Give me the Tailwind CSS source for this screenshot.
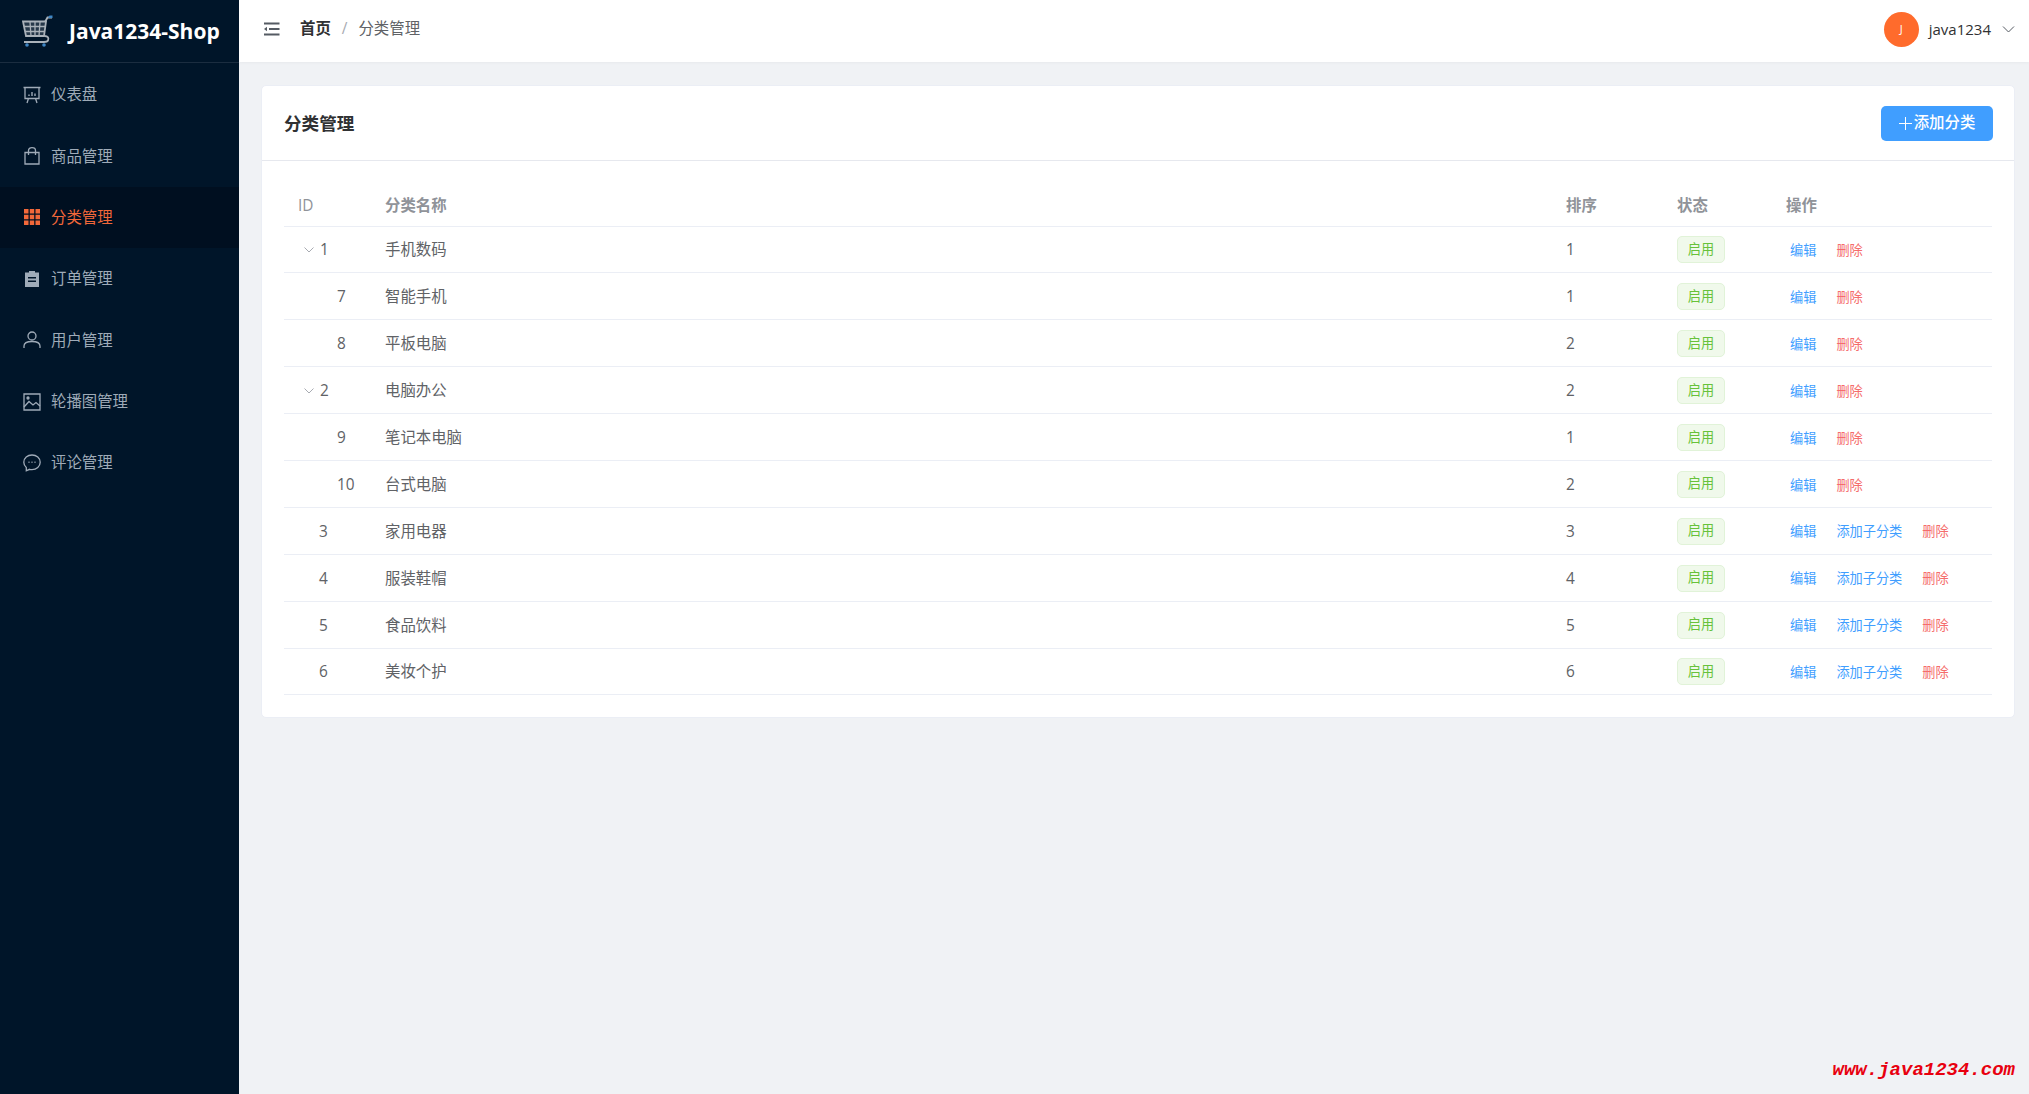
<!DOCTYPE html>
<html lang="zh-CN">
<head>
  <meta charset="UTF-8">
  <title>分类管理</title>
  <script src="https://cdn.jsdelivr.net/npm/@tailwindcss/browser@4"></script>
</head>
<body class="bg-[#f0f2f5] font-['Open_Sans','Noto_Sans_CJK_SC',sans-serif] text-[15.4px] text-[#606266]">
  <div class="relative flex h-screen overflow-hidden">

    <!-- sidebar -->
    <aside class="w-[239px] shrink-0 bg-[#001529] text-[#9fabb8]">
      <div class="flex h-[63px] items-center gap-[15px] border-b border-[#1b2d40] pl-[22px]">
        <svg class="h-[32px] w-[32px] shrink-0" viewBox="0 0 32 32" fill="none">
          <path d="M1 6.5H24L22 21H4Z" fill="#26384a" stroke="#aab2ba" stroke-width="1.8"/>
          <path d="M8 7L9 21M13 7V21M18 7L17 21M2 11.5H23.5M3 16.5H22.5" stroke="#aab2ba" stroke-width="1.3"/>
          <path d="M23 7L25.5 2.5H30M22.5 21C26 21 27 23 26 25.5C25.5 26.5 24 27 22 27H2" stroke="#aab2ba" stroke-width="1.8"/>
          <path d="M26 2.5L27.5 0.5H30.5V3H27Z" fill="#3f86c4"/>
          <circle cx="5" cy="30" r="1.8" fill="#3f86c4"/>
          <circle cx="22" cy="30" r="1.8" fill="#3f86c4"/>
        </svg>
        <span class="text-[21px] leading-none font-bold text-white">Java1234-Shop</span>
      </div>
      <nav class="pt-px">
        <a class="flex h-[61.4px] items-center gap-[10px] pl-[23px]">
          <svg class="h-[18px] w-[18px] shrink-0" viewBox="0 0 18 18" fill="none" stroke="currentColor" stroke-width="1.3"><path d="M0.5 1.5H17.5M2 1.5V12.5H16V1.5M5.5 12.5L4 17M12.5 12.5L14 17"/><path d="M6 10V8.5M9 10V6M12 10V7.5" stroke-width="1.4"/></svg>
          <span>仪表盘</span>
        </a>
        <a class="flex h-[61.4px] items-center gap-[10px] pl-[23px]">
          <svg class="h-[18px] w-[18px] shrink-0" viewBox="0 0 18 18" fill="none" stroke="currentColor" stroke-width="1.3"><path d="M2 5.5H16V17H2Z"/><path d="M5.5 8V3.5C5.5 1.5 7 0.7 9 0.7S12.5 1.5 12.5 3.5V8"/></svg>
          <span>商品管理</span>
        </a>
        <a class="flex h-[61.4px] items-center gap-[10px] bg-[#000f20] pl-[23px] text-[#f2683a]">
          <svg class="h-[18px] w-[18px] shrink-0" viewBox="0 0 18 18" fill="currentColor"><path d="M1 1H5.5V5.5H1ZM6.8 1H11.2V5.5H6.8ZM12.5 1H17V5.5H12.5ZM1 6.8H5.5V11.2H1ZM6.8 6.8H11.2V11.2H6.8ZM12.5 6.8H17V11.2H12.5ZM1 12.5H5.5V17H1ZM6.8 12.5H11.2V17H6.8ZM12.5 12.5H17V17H12.5Z"/></svg>
          <span>分类管理</span>
        </a>
        <a class="flex h-[61.4px] items-center gap-[10px] pl-[23px]">
          <svg class="h-[18px] w-[18px] shrink-0" viewBox="0 0 18 18"><path fill="currentColor" fill-rule="evenodd" d="M2 2.5H6V1H12V2.5H16V17H2ZM5 7V8.4H13V7ZM5 10.5V11.9H13V10.5Z"/></svg>
          <span>订单管理</span>
        </a>
        <a class="flex h-[61.4px] items-center gap-[10px] pl-[23px]">
          <svg class="h-[18px] w-[18px] shrink-0" viewBox="0 0 18 18" fill="none" stroke="currentColor" stroke-width="1.3"><circle cx="9" cy="5" r="4"/><path d="M1 17V15C1 12 4 10.5 9 10.5S17 12 17 15V17"/></svg>
          <span>用户管理</span>
        </a>
        <a class="flex h-[61.4px] items-center gap-[10px] pl-[23px]">
          <svg class="h-[18px] w-[18px] shrink-0" viewBox="0 0 18 18" fill="none" stroke="currentColor" stroke-width="1.3"><path d="M1 1H17V17H1Z"/><path d="M1 14L6 8.5L10 12L13 9.5L17 13"/><circle cx="5" cy="5" r="1" fill="currentColor"/></svg>
          <span>轮播图管理</span>
        </a>
        <a class="flex h-[61.4px] items-center gap-[10px] pl-[23px]">
          <svg class="h-[18px] w-[18px] shrink-0" viewBox="0 0 18 18" fill="none" stroke="currentColor" stroke-width="1.3"><path d="M9 1C4.5 1 0.8 4 0.8 8.3C0.8 10.5 1.8 12.3 3.3 13.6V16.8L6.5 15.3C7.3 15.5 8.1 15.6 9 15.6C13.5 15.6 17.2 12.5 17.2 8.3S13.5 1 9 1Z"/><path d="M5.5 8.3H6.5M8.5 8.3H9.5M11.5 8.3H12.5" stroke-width="1.5"/></svg>
          <span>评论管理</span>
        </a>
      </nav>
    </aside>

    <div class="flex min-w-0 flex-1 flex-col">
      <!-- top bar -->
      <header class="flex h-[62px] shrink-0 items-center bg-white pr-[14px] pb-[4px] pl-[24px] shadow-[0_1px_3px_rgba(0,0,0,0.04)]">
        <svg class="h-[14px] w-[17px] shrink-0" viewBox="0 0 17 14" fill="none" stroke="#555b63" stroke-width="2"><path d="M1 1.5H16.5M6 7H16.5M1 12.5H16.5"/><path d="M4 4.8L1 7L4 9.2Z" fill="#555b63" stroke="none"/></svg>
        <div class="ml-[20px] flex items-center text-[15.4px]">
          <span class="font-bold text-[#303133]">首页</span>
          <span class="mx-[11px] text-[#a8abb2]">/</span>
          <span>分类管理</span>
        </div>
        <div class="ml-auto flex items-center">
          <div class="flex h-[35px] w-[35px] items-center justify-center rounded-full bg-[#ff6b2c] text-[11px] text-white">J</div>
          <span class="ml-[10px] text-[15px] text-[#303133]">java1234</span>
          <svg class="ml-[11px] h-[7px] w-[13px]" viewBox="0 0 12 7" fill="none" stroke="#555b63" stroke-width="1"><path d="M0.5 0.5L6 6L11.5 0.5"/></svg>
        </div>
      </header>

      <main class="flex-1 pt-[23px] pr-[14px] pl-[22px]">
        <section class="rounded-[5px] border border-[#ebeef5] bg-white">
          <div class="flex h-[75px] items-center justify-between border-b border-[#e6e8ee] pr-[21px] pl-[22px]">
            <h2 class="text-[17.6px] font-bold text-[#303133]">分类管理</h2>
            <button class="flex h-[35px] w-[112px] items-center justify-center rounded-[5px] bg-[#409eff] text-[15.4px] font-medium text-white">
              <svg class="mr-[2px] h-[13px] w-[13px]" viewBox="0 0 13 13" fill="none" stroke="white" stroke-width="1"><path d="M6.5 0V13M0 6.5H13"/></svg>
              添加分类
            </button>
          </div>
          <div class="px-[22px] pt-[21px] pb-[22px]">
            <table class="w-full table-fixed border-collapse text-left">
              <colgroup>
                <col class="w-[89px]"><col class="w-[1192px]"><col class="w-[112px]"><col class="w-[109px]"><col>
              </colgroup>
              <thead>
                <tr class="h-[44px] border-b border-[#ebeef5] text-[#909399]">
                  <th class="pt-[3px] pl-[14px] font-medium">ID</th>
                  <th class="pt-[3px] pl-[12px] font-semibold">分类名称</th>
                  <th class="pt-[3px] pl-[1px] font-semibold">排序</th>
                  <th class="pt-[3px] font-semibold">状态</th>
                  <th class="pt-[3px] font-semibold">操作</th>
                </tr>
              </thead>
              <tbody>
                <tr class="h-[46.9px] border-b border-[#ebeef5]">
                  <td class="pt-px pl-[20px]"><span class="flex items-center"><svg class="mr-[6px] h-[6px] w-[10px]" viewBox="0 0 10 6" fill="none" stroke="#a8abb2"><path d="M0.5 0.5L5 5L9.5 0.5"/></svg>1</span></td>
                  <td class="pt-px pl-[12px]">手机数码</td><td class="pt-px pl-[1px]">1</td>
                  <td class="pt-px"><span class="inline-flex h-[27px] w-[48px] items-center justify-center rounded-[5px] border border-[#e1f3d8] bg-[#f0f9eb] text-[13.2px] text-[#67c23a]">启用</span></td>
                  <td class="pt-[3px] pl-[4px] text-[13.2px]"><span class="flex gap-[20px]"><a class="text-[#409eff]">编辑</a><a class="text-[#f56c6c]">删除</a></span></td>
                </tr>
                <tr class="h-[46.9px] border-b border-[#ebeef5]">
                  <td class="pt-px pl-[53px]">7</td>
                  <td class="pt-px pl-[12px]">智能手机</td><td class="pt-px pl-[1px]">1</td>
                  <td class="pt-px"><span class="inline-flex h-[27px] w-[48px] items-center justify-center rounded-[5px] border border-[#e1f3d8] bg-[#f0f9eb] text-[13.2px] text-[#67c23a]">启用</span></td>
                  <td class="pt-[3px] pl-[4px] text-[13.2px]"><span class="flex gap-[20px]"><a class="text-[#409eff]">编辑</a><a class="text-[#f56c6c]">删除</a></span></td>
                </tr>
                <tr class="h-[46.9px] border-b border-[#ebeef5]">
                  <td class="pt-px pl-[53px]">8</td>
                  <td class="pt-px pl-[12px]">平板电脑</td><td class="pt-px pl-[1px]">2</td>
                  <td class="pt-px"><span class="inline-flex h-[27px] w-[48px] items-center justify-center rounded-[5px] border border-[#e1f3d8] bg-[#f0f9eb] text-[13.2px] text-[#67c23a]">启用</span></td>
                  <td class="pt-[3px] pl-[4px] text-[13.2px]"><span class="flex gap-[20px]"><a class="text-[#409eff]">编辑</a><a class="text-[#f56c6c]">删除</a></span></td>
                </tr>
                <tr class="h-[46.9px] border-b border-[#ebeef5]">
                  <td class="pt-px pl-[20px]"><span class="flex items-center"><svg class="mr-[6px] h-[6px] w-[10px]" viewBox="0 0 10 6" fill="none" stroke="#a8abb2"><path d="M0.5 0.5L5 5L9.5 0.5"/></svg>2</span></td>
                  <td class="pt-px pl-[12px]">电脑办公</td><td class="pt-px pl-[1px]">2</td>
                  <td class="pt-px"><span class="inline-flex h-[27px] w-[48px] items-center justify-center rounded-[5px] border border-[#e1f3d8] bg-[#f0f9eb] text-[13.2px] text-[#67c23a]">启用</span></td>
                  <td class="pt-[3px] pl-[4px] text-[13.2px]"><span class="flex gap-[20px]"><a class="text-[#409eff]">编辑</a><a class="text-[#f56c6c]">删除</a></span></td>
                </tr>
                <tr class="h-[46.9px] border-b border-[#ebeef5]">
                  <td class="pt-px pl-[53px]">9</td>
                  <td class="pt-px pl-[12px]">笔记本电脑</td><td class="pt-px pl-[1px]">1</td>
                  <td class="pt-px"><span class="inline-flex h-[27px] w-[48px] items-center justify-center rounded-[5px] border border-[#e1f3d8] bg-[#f0f9eb] text-[13.2px] text-[#67c23a]">启用</span></td>
                  <td class="pt-[3px] pl-[4px] text-[13.2px]"><span class="flex gap-[20px]"><a class="text-[#409eff]">编辑</a><a class="text-[#f56c6c]">删除</a></span></td>
                </tr>
                <tr class="h-[46.9px] border-b border-[#ebeef5]">
                  <td class="pt-px pl-[53px]">10</td>
                  <td class="pt-px pl-[12px]">台式电脑</td><td class="pt-px pl-[1px]">2</td>
                  <td class="pt-px"><span class="inline-flex h-[27px] w-[48px] items-center justify-center rounded-[5px] border border-[#e1f3d8] bg-[#f0f9eb] text-[13.2px] text-[#67c23a]">启用</span></td>
                  <td class="pt-[3px] pl-[4px] text-[13.2px]"><span class="flex gap-[20px]"><a class="text-[#409eff]">编辑</a><a class="text-[#f56c6c]">删除</a></span></td>
                </tr>
                <tr class="h-[46.9px] border-b border-[#ebeef5]">
                  <td class="pt-px pl-[35px]">3</td>
                  <td class="pt-px pl-[12px]">家用电器</td><td class="pt-px pl-[1px]">3</td>
                  <td class="pt-px"><span class="inline-flex h-[27px] w-[48px] items-center justify-center rounded-[5px] border border-[#e1f3d8] bg-[#f0f9eb] text-[13.2px] text-[#67c23a]">启用</span></td>
                  <td class="pt-[3px] pl-[4px] text-[13.2px]"><span class="flex gap-[20px]"><a class="text-[#409eff]">编辑</a><a class="text-[#409eff]">添加子分类</a><a class="text-[#f56c6c]">删除</a></span></td>
                </tr>
                <tr class="h-[46.9px] border-b border-[#ebeef5]">
                  <td class="pt-px pl-[35px]">4</td>
                  <td class="pt-px pl-[12px]">服装鞋帽</td><td class="pt-px pl-[1px]">4</td>
                  <td class="pt-px"><span class="inline-flex h-[27px] w-[48px] items-center justify-center rounded-[5px] border border-[#e1f3d8] bg-[#f0f9eb] text-[13.2px] text-[#67c23a]">启用</span></td>
                  <td class="pt-[3px] pl-[4px] text-[13.2px]"><span class="flex gap-[20px]"><a class="text-[#409eff]">编辑</a><a class="text-[#409eff]">添加子分类</a><a class="text-[#f56c6c]">删除</a></span></td>
                </tr>
                <tr class="h-[46.9px] border-b border-[#ebeef5]">
                  <td class="pt-px pl-[35px]">5</td>
                  <td class="pt-px pl-[12px]">食品饮料</td><td class="pt-px pl-[1px]">5</td>
                  <td class="pt-px"><span class="inline-flex h-[27px] w-[48px] items-center justify-center rounded-[5px] border border-[#e1f3d8] bg-[#f0f9eb] text-[13.2px] text-[#67c23a]">启用</span></td>
                  <td class="pt-[3px] pl-[4px] text-[13.2px]"><span class="flex gap-[20px]"><a class="text-[#409eff]">编辑</a><a class="text-[#409eff]">添加子分类</a><a class="text-[#f56c6c]">删除</a></span></td>
                </tr>
                <tr class="h-[46.9px] border-b border-[#ebeef5]">
                  <td class="pt-px pl-[35px]">6</td>
                  <td class="pt-px pl-[12px]">美妆个护</td><td class="pt-px pl-[1px]">6</td>
                  <td class="pt-px"><span class="inline-flex h-[27px] w-[48px] items-center justify-center rounded-[5px] border border-[#e1f3d8] bg-[#f0f9eb] text-[13.2px] text-[#67c23a]">启用</span></td>
                  <td class="pt-[3px] pl-[4px] text-[13.2px]"><span class="flex gap-[20px]"><a class="text-[#409eff]">编辑</a><a class="text-[#409eff]">添加子分类</a><a class="text-[#f56c6c]">删除</a></span></td>
                </tr>
              </tbody>
            </table>
          </div>
        </section>
      </main>
    </div>

    <!-- watermark -->
    <div class="absolute right-[14px] bottom-[14px] font-['Liberation_Mono',monospace] text-[19px] leading-none font-bold text-[#e8000f] italic">www.java1234.com</div>
  </div>
</body>
</html>
